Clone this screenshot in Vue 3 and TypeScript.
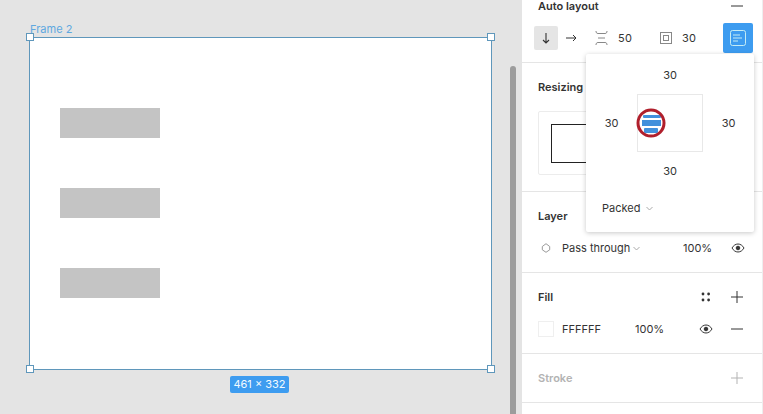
<script setup lang="ts">
const rects: number[] = [1, 2, 3]
const handles: string[] = ['tl', 'tr', 'bl', 'br']
</script>

<template>
  <div class="app">
    <main class="canvas">
      <span class="frame-label">Frame 2</span>
      <div class="frame">
        <div v-for="r in rects" :key="r" class="rect"></div>
        <i v-for="h in handles" :key="h" class="handle" :class="h"></i>
        <span class="size-badge">461 × 332</span>
      </div>
      <div class="scrollbar"></div>
    </main>

    <aside class="panel">
      <section class="sec sec-auto">
        <div class="auto-head">
          <h3>Auto layout</h3>
          <svg class="ic head-minus" width="12" height="12" viewBox="0 0 12 12"><path d="M0 6h12" stroke="#333" /></svg>
        </div>
        <div class="controls">
          <span class="dir-btn">
            <svg width="12" height="12" viewBox="0 0 12 12" fill="none" stroke="#333" stroke-width="1.1"><path d="M6 1v10M3 8l3 3 3-3" /></svg>
          </span>
          <svg class="dir-right" width="12" height="12" viewBox="0 0 12 12" fill="none" stroke="#333" stroke-width="1"><path d="M1 6h10M8 3l3 3-3 3" /></svg>
          <svg class="spacing-ic" width="13" height="14" viewBox="0 0 13 14" fill="none" stroke="#888" stroke-width="1"><path d="M1 0c0 1.500.5 2.500 2 2.500h7c1.500 0 2-1 2-2.500M3 7h7M1 14c0-1.500.5-2.500 2-2.500h7c1.500 0 2 1 2 2.500" /></svg>
          <span class="num num-gap">50</span>
          <svg class="pad-ic" width="12" height="12" viewBox="0 0 12 12" fill="none" stroke="#888" stroke-width="1"><rect x=".5" y=".5" width="11" height="11" /><rect x="3.500" y="3.500" width="5" height="5" /></svg>
          <span class="num num-pad">30</span>
          <span class="align-btn">
            <svg width="16" height="16" viewBox="0 0 16 16" fill="none" stroke="#c4ecf5" stroke-width="1"><rect x=".5" y=".5" width="15" height="15" rx="2" /><path d="M3 5h7M3 8h9M3 11h5" /></svg>
          </span>
        </div>
      </section>

      <section class="sec sec-resize">
        <div class="title-row"><h3>Resizing</h3></div>
        <div class="resize-box"><div class="resize-inner"></div></div>
      </section>

      <section class="sec">
        <div class="title-row"><h3>Layer</h3></div>
        <div class="row layer-row">
          <svg width="10" height="10" viewBox="0 0 10 10" fill="none" stroke="#999"><path d="M5 .7 8.700 3.500v3.300L5 9.300 1.300 6.800V3.500z" stroke-linejoin="round" /></svg>
          <span class="with-chevron">Pass through
            <svg class="chev" width="7" height="5" viewBox="0 0 7 5" fill="none" stroke="#aaa"><path d="m.5 1 3 3 3-3" /></svg>
          </span>
          <span>100%</span>
          <svg class="eye" width="14" height="10" viewBox="0 0 14 10" fill="none" stroke="#333"><path d="M1 5c1.500-2.500 3.500-4 6-4s4.500 1.500 6 4c-1.500 2.500-3.500 4-6 4S2.500 7.500 1 5Z" /><circle cx="7" cy="5" r="1.800" fill="#333" /></svg>
        </div>
      </section>

      <section class="sec">
        <div class="title-row">
          <h3>Fill</h3>
          <span class="title-icons">
            <svg width="24" height="12" viewBox="0 0 24 12" fill="#333"><circle cx="9" cy="3" r="1.400" /><circle cx="14.600" cy="3" r="1.400" /><circle cx="9" cy="9" r="1.400" /><circle cx="14.600" cy="9" r="1.400" /></svg>
            <svg width="24" height="12" viewBox="0 0 24 12" stroke="#333"><path d="M12 0v12M6 6h12" /></svg>
          </span>
        </div>
        <div class="row fill-row">
          <span class="swatch"></span>
          <span>FFFFFF</span>
          <span>100%</span>
          <svg class="eye" width="14" height="10" viewBox="0 0 14 10" fill="none" stroke="#333"><path d="M1 5c1.500-2.500 3.500-4 6-4s4.500 1.500 6 4c-1.500 2.500-3.500 4-6 4S2.500 7.500 1 5Z" /><circle cx="7" cy="5" r="1.800" fill="#333" /></svg>
          <svg class="minus" width="24" height="12" viewBox="0 0 24 12" stroke="#333"><path d="M6 6h12" /></svg>
        </div>
      </section>

      <section class="sec sec-stroke">
        <div class="title-row">
          <h3>Stroke</h3>
          <span class="title-icons">
            <svg width="24" height="12" viewBox="0 0 24 12" stroke="#b3b3b3"><path d="M12 0v12M6 6h12" /></svg>
          </span>
        </div>
      </section>

      <div class="popup">
        <div class="pad-grid">
          <span class="cell top">30</span>
          <span class="cell left">30</span>
          <div class="align-box">
            <svg class="marker" width="30" height="30" viewBox="0 0 30 30">
              <rect x="7" y="7" width="18" height="3" rx="1" fill="#4290dc" />
              <rect x="6" y="12" width="19" height="6" fill="#4290dc" />
              <rect x="8" y="20" width="14" height="5" rx="1" fill="#4290dc" />
              <circle cx="15" cy="15" r="13" fill="none" stroke="#b01f2c" stroke-width="3" />
            </svg>
          </div>
          <span class="cell right">30</span>
          <span class="cell bottom">30</span>
        </div>
        <div class="packed">Packed
          <svg class="chev" width="7" height="5" viewBox="0 0 7 5" fill="none" stroke="#aaa"><path d="m.5 1 3 3 3-3" /></svg>
        </div>
      </div>
    </aside>
  </div>
</template>

<style>
html, body { margin: 0; background: #e4e4e4; }
</style>

<style scoped>
.app {
  width: 763px;
  height: 414px;
  display: flex;
  overflow: hidden;
  font-family: Inter, "Liberation Sans", sans-serif;
  font-size: 11px;
  color: #333;
}
.canvas {
  position: relative;
  width: 522px;
  flex: none;
  background: #e4e4e4;
}
.frame-label {
  position: absolute;
  left: 30px;
  top: 23px;
  font-size: 11px;
  line-height: 13px;
  color: #5ea8e0;
}
.frame {
  position: absolute;
  left: 29px;
  top: 37px;
  box-sizing: border-box;
  width: 463px;
  height: 333px;
  border: 1px solid #5f97bb;
  background: #fff;
  display: flex;
  flex-direction: column;
  justify-content: center;
  gap: 50px;
  padding: 0 0 1px 30px;
}
.rect {
  width: 100px;
  height: 30px;
  background: #c4c4c4;
}
.handle {
  position: absolute;
  width: 8px;
  height: 8px;
  box-sizing: border-box;
  background: #fff;
  border: 1px solid #5f97bb;
}
.handle.tl { left: -4px; top: -5px; }
.handle.tr { right: -4px; top: -5px; }
.handle.bl { left: -4px; bottom: -4px; }
.handle.br { right: -4px; bottom: -4px; }
.size-badge {
  position: absolute;
  left: 200px;
  top: 338px;
  width: 59px;
  height: 17px;
  border-radius: 2px;
  background: #3d9cf0;
  color: #f2fbff;
  font-size: 11px;
  line-height: 17px;
  text-align: center;
}
.scrollbar {
  position: absolute;
  left: 510px;
  top: 66px;
  bottom: -4px;
  width: 6px;
  border-radius: 3px 3px 0 0;
  background: #9c9c9c;
}
.panel {
  position: relative;
  flex: 1;
  min-width: 0;
  background: #fff;
  border-right: 1px solid #eeeeee;
}
.sec {
  padding: 12px 13px 8px 16px;
  border-bottom: 1px solid #e5e5e5;
}
h3 {
  margin: 0;
  font-size: 11px;
  font-weight: 600;
  color: #333;
}
.sec-auto {
  height: 62px;
  padding: 0;
}
.auto-head {
  height: 12px;
  display: flex;
  align-items: center;
  justify-content: space-between;
  padding: 0 19px 0 16px;
}
.controls {
  display: flex;
  align-items: center;
  height: 30px;
  margin-top: 11px;
  padding-left: 12px;
}
.dir-btn {
  width: 24px;
  height: 24px;
  border-radius: 2px;
  background: #e5e5e5;
  display: flex;
  align-items: center;
  justify-content: center;
}
.dir-right { margin-left: 7px; }
.spacing-ic { margin-left: 18px; }
.num-gap { margin-left: 10px; width: 42px; }
.num-pad { margin-left: 10px; width: 41px; }
.num { line-height: 30px; letter-spacing: .2px; }
.align-btn {
  width: 30px;
  height: 30px;
  border-radius: 2px;
  background: #3d9cf0;
  display: flex;
  align-items: center;
  justify-content: center;
}
.title-row {
  height: 24px;
  display: flex;
  align-items: center;
  justify-content: space-between;
}
.title-icons {
  display: flex;
  gap: 7px;
}
.sec-resize { padding-bottom: 16px; }
.resize-box {
  margin-top: 12px;
  width: 190px;
  height: 64px;
  box-sizing: border-box;
  border: 1px solid #ececec;
  border-radius: 2px;
  padding: 12px;
}
.resize-inner {
  width: 120px;
  height: 39px;
  box-sizing: border-box;
  border: 1px solid #222;
}
.row {
  height: 32px;
  margin-top: 4px;
  display: grid;
  align-items: center;
}
.layer-row { grid-template-columns: 24px 121px 43px 24px; }
.layer-row svg:first-child { margin-left: 3px; }
.fill-row { grid-template-columns: 24px 73px 59px 24px 31px; }
.eye { justify-self: center; }
.swatch {
  width: 16px;
  height: 16px;
  box-sizing: border-box;
  border: 1px solid #efefef;
  background: #fff;
}
.minus { justify-self: end; }
.with-chevron, .packed {
  display: flex;
  align-items: center;
}
.chev { margin-left: 6px; }
.sec-stroke { padding-bottom: 12px; }
.sec-stroke h3 { color: #b3b3b3; }
.popup {
  position: absolute;
  left: 64px;
  top: 54px;
  width: 168px;
  height: 178px;
  background: #fff;
  border-radius: 2px;
  box-shadow: 0 1px 5px rgba(0, 0, 0, .22);
}
.pad-grid {
  display: grid;
  grid-template-columns: 51px 66px 51px;
  grid-template-rows: 40px 58px 38px;
}
.cell {
  display: flex;
  align-items: center;
  justify-content: center;
}
.cell.top { grid-column: 2; grid-row: 1; padding-top: 2px; }
.cell.left { grid-column: 1; grid-row: 2; }
.cell.right { grid-column: 3; grid-row: 2; }
.cell.bottom { grid-column: 2; grid-row: 3; }
.align-box {
  grid-column: 2;
  grid-row: 2;
  position: relative;
  border: 1px solid #e8e8e8;
  box-sizing: border-box;
}
.marker {
  position: absolute;
  left: -2px;
  top: 13px;
}
.packed {
  margin: 10px 0 0 16px;
  height: 16px;
}
</style>
